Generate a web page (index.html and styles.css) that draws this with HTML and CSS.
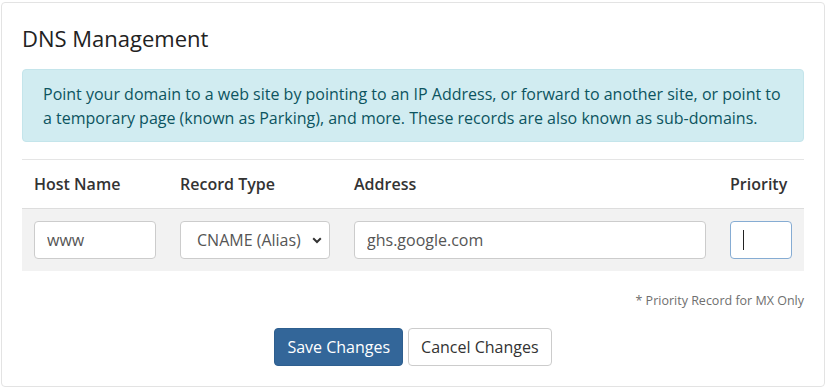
FILE: index.html
```html
<!DOCTYPE html>
<html lang="en">
<head>
    <meta charset="UTF-8">
    <meta name="viewport" content="width=device-width, initial-scale=1.0">
    <title>DNS Management</title>
    <link rel="stylesheet" href="styles.css">
</head>
<body>
    <div class="card">
        <h2 class="card-title">DNS Management</h2>

        <div class="alert-info">
            Point your domain to a web site by pointing to an IP Address, or forward to another site, or point to a temporary page (known as Parking), and more. These records are also known as sub-domains.
        </div>

        <table class="dns-table">
            <thead>
                <tr>
                    <th class="col-host">Host Name</th>
                    <th class="col-type">Record Type</th>
                    <th class="col-address">Address</th>
                    <th class="col-priority">Priority</th>
                </tr>
            </thead>
            <tbody>
                <tr>
                    <td><input type="text" class="form-input" value="www"></td>
                    <td>
                        <div class="select-wrap">
                            <select class="form-input form-select">
                                <option>CNAME (Alias)</option>
                                <option>A (Address)</option>
                                <option>MX (Mail)</option>
                            </select>
                            <svg class="select-arrow" width="10" height="7" viewBox="0 0 10 7">
                                <path d="M1.2 1.3 L5 5 L8.8 1.3" fill="none" stroke="#333" stroke-width="2"/>
                            </svg>
                        </div>
                    </td>
                    <td><input type="text" class="form-input" value="ghs.google.com"></td>
                    <td>
                        <div class="caret-wrap">
                            <input type="text" class="form-input is-focused" value="">
                        </div>
                    </td>
                </tr>
            </tbody>
        </table>

        <p class="footnote">* Priority Record for MX Only</p>

        <div class="button-row">
            <button class="btn btn-primary">Save Changes</button>
            <button class="btn btn-default">Cancel Changes</button>
        </div>
    </div>
</body>
</html>
```

FILE: styles.css
```css
body {
    font-family: 'Open Sans', 'Liberation Sans', sans-serif;
    background-color: #ffffff;
    color: #333333;
    margin: 0;
    padding: 0;
}
.card {
    margin: 2px 0 0 1px;
    padding: 20px;
    border: 1px solid #e3e3e3;
    border-radius: 4px;
    background-color: #ffffff;
}
.card-title {
    font-size: 22px;
    font-weight: 400;
    line-height: 30px;
    color: #222222;
    margin: 0 0 16px 0;
}
.alert-info {
    background-color: #d1ecf1;
    border: 1px solid #c4e5eb;
    border-radius: 4px;
    color: #0c5460;
    font-size: 16px;
    line-height: 24px;
    padding: 12px 20px 11px 20px;
    margin-bottom: 17px;
}
.dns-table {
    width: 100%;
    border-collapse: collapse;
    table-layout: fixed;
}
.dns-table th {
    text-align: left;
    font-size: 16px;
    font-weight: 600;
    line-height: 24px;
    color: #333333;
    padding: 12px;
    border-top: 1px solid #e5e5e5;
}
.dns-table td {
    padding: 12px;
    background-color: #f2f2f2;
    border-top: 1px solid #dddddd;
}
.col-host { width: 122px; }
.col-type { width: 150px; }
.col-address { width: auto; }
.col-priority { width: 62px; }
.form-input {
    display: block;
    width: 100%;
    box-sizing: border-box;
    height: 38px;
    padding: 6px 12px;
    font-family: inherit;
    font-size: 16px;
    color: #555555;
    background-color: #ffffff;
    border: 1px solid #cccccc;
    border-radius: 4px;
    outline: none;
}
.form-input.is-focused {
    border-color: #86acd3;
}
.select-wrap {
    position: relative;
}
.form-select {
    appearance: none;
    -webkit-appearance: none;
    padding-left: 16px;
    padding-right: 28px;
}
.select-arrow {
    position: absolute;
    right: 8px;
    top: 16px;
    pointer-events: none;
}
.caret-wrap {
    position: relative;
}
.caret-wrap::after {
    content: "";
    position: absolute;
    left: 13px;
    top: 9px;
    width: 1px;
    height: 20px;
    background-color: #222222;
}
.footnote {
    text-align: right;
    font-size: 12.5px;
    line-height: 20px;
    color: #6f6f6f;
    margin: 20px 0 17px 0;
}
.button-row {
    display: flex;
    justify-content: center;
    gap: 5px;
}
.btn {
    font-family: inherit;
    font-size: 16px;
    line-height: 24px;
    padding: 6px 12px;
    border-radius: 4px;
    cursor: pointer;
}
.btn-primary {
    background-color: #336699;
    border: 1px solid #2e5f8f;
    color: #ffffff;
}
.btn-default {
    background-color: #ffffff;
    border: 1px solid #cccccc;
    color: #333333;
}
```
